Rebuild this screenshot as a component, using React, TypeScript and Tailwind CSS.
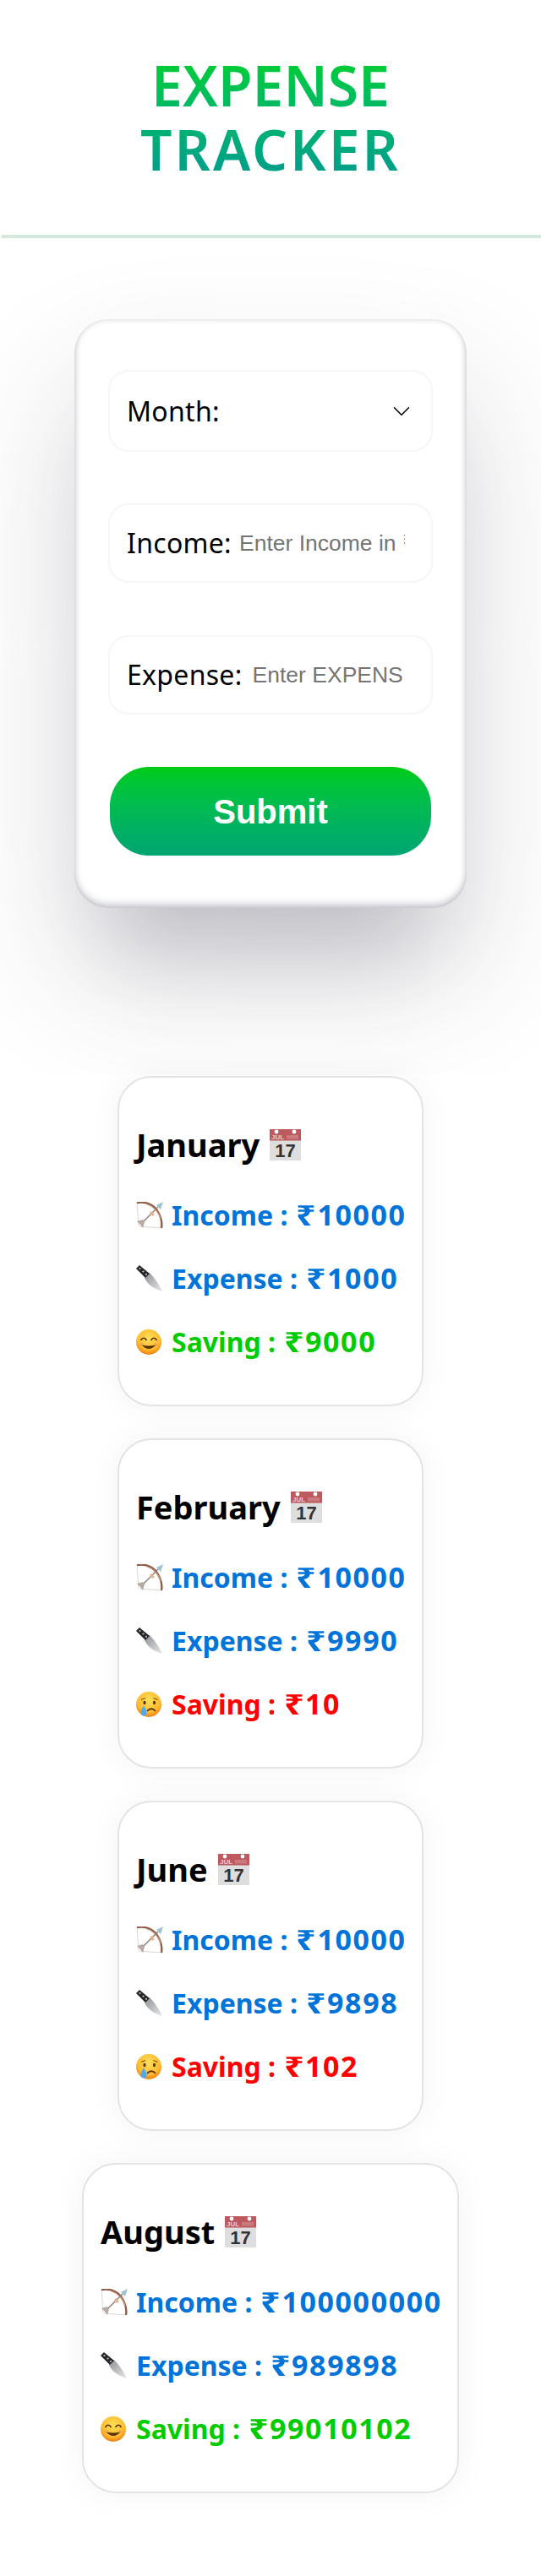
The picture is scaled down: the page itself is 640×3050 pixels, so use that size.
import { ChevronDown } from "lucide-react";

function CalendarIcon() {
  return (
    <svg width="37" height="37" viewBox="0 0 37 37" className="inline-block shrink-0 overflow-visible">
      <rect width="37" height="37" fill="#dedede" />
      <rect width="37" height="13.5" fill="#bc5a60" />
      <circle cx="8" cy="3" r="2.4" fill="#fff" />
      <circle cx="29" cy="3" r="2.4" fill="#fff" />
      <rect x="20" y="7" width="14" height="4.5" fill="#c97a7f" />
      <text x="2" y="12" fontSize="8" fill="#eccfd0" fontFamily="Liberation Sans, sans-serif">JUL</text>
      <text x="18.5" y="33" textAnchor="middle" fontSize="22" fill="#333" fontFamily="Liberation Sans, sans-serif">17</text>
    </svg>
  );
}

function BowIcon() {
  return (
    <svg width="32" height="32" viewBox="0 0 32 32" className="shrink-0">
      <path d="M1 1 L3 28" stroke="#d2cdc9" strokeWidth="0.8" fill="none" />
      <path d="M3 29 L30 31" stroke="#d2cdc9" strokeWidth="0.8" fill="none" />
      <path d="M1 1 C12 -1 22 4 26 12 C30 19 31 25 30 31" stroke="#8f5e48" strokeWidth="2.4" fill="none" />
      <path d="M13 3 C20 5 27 12 29 20" stroke="#c9997f" strokeWidth="1.2" fill="none" />
      <path d="M8 24 L26 6" stroke="#8d7f78" strokeWidth="1.5" />
      <path d="M24 4 L32 0 L29 9 Z" fill="#9cc3cf" />
      <path d="M1 23 L8 21 L10 24 L8 31 L5 27 Z" fill="#b7aaa4" />
      <path d="M18 11 L22 15 L19 17 L16 13 Z" fill="#e2b48c" />
    </svg>
  );
}

function KnifeIcon() {
  return (
    <svg width="32" height="32" viewBox="0 0 32 32" className="shrink-0">
      <defs>
        <linearGradient id="blade" x1="0" y1="0" x2="1" y2="1">
          <stop offset="0%" stopColor="#8d9094" />
          <stop offset="100%" stopColor="#e8e9ea" />
        </linearGradient>
      </defs>
      <path d="M10 15 L16 9 C22 15 28 24 31 31 C22 28 14 24 10 15 Z" fill="url(#blade)" />
      <path d="M0 4 L4 0 L16 10 L11 15 Z" fill="#26262a" />
      <circle cx="4.5" cy="4" r="1.1" fill="#c4c4c4" />
      <circle cx="8.5" cy="7.5" r="1.1" fill="#c4c4c4" />
      <circle cx="12" cy="10.8" r="1.1" fill="#c4c4c4" />
    </svg>
  );
}

function SmileIcon() {
  return (
    <svg width="30" height="30" viewBox="0 0 30 30" className="shrink-0">
      <defs>
        <radialGradient id="smile" cx="50%" cy="35%" r="65%">
          <stop offset="0%" stopColor="#ffe05a" />
          <stop offset="70%" stopColor="#fdbb2e" />
          <stop offset="100%" stopColor="#ee7d10" />
        </radialGradient>
      </defs>
      <circle cx="15" cy="15" r="15" fill="url(#smile)" />
      <path d="M5.5 13 Q9 7.5 12.5 13 M17.5 13 Q21 7.5 24.5 13" stroke="#5a3208" strokeWidth="1.7" fill="none" />
      <path d="M6 18 Q15 28 24 18 Q15 21 6 18 Z" fill="#5a3208" />
      <ellipse cx="6" cy="18" rx="3" ry="2" fill="#f59a50" opacity="0.5" />
      <ellipse cx="24" cy="18" rx="3" ry="2" fill="#f59a50" opacity="0.5" />
    </svg>
  );
}

function CryIcon() {
  return (
    <svg width="30" height="30" viewBox="0 0 30 30" className="shrink-0">
      <defs>
        <radialGradient id="cry" cx="50%" cy="35%" r="65%">
          <stop offset="0%" stopColor="#ffe05a" />
          <stop offset="70%" stopColor="#fdbb2e" />
          <stop offset="100%" stopColor="#ee7d10" />
        </radialGradient>
      </defs>
      <circle cx="15" cy="15" r="15" fill="url(#cry)" />
      <ellipse cx="10" cy="13" rx="1.6" ry="2.2" fill="#5a3208" />
      <ellipse cx="21.5" cy="13" rx="1.6" ry="2.2" fill="#5a3208" />
      <path d="M6 9.5 L11 7.5 M25.5 9.5 L20.5 7.5" stroke="#7a4a10" strokeWidth="1.2" fill="none" />
      <path d="M13 23 Q18 17.5 23 23" stroke="#5a3208" strokeWidth="1.8" fill="none" />
      <path d="M9 16.5 Q4.5 23 6 27 Q9 30 12 27 Q13.5 23 9 16.5 Z" fill="#4fa9ea" />
    </svg>
  );
}

type MonthRecord = { month: string; income: number; expense: number; saving: number; wide?: boolean; happy: boolean };

const records: MonthRecord[] = [
  { month: "January", income: 10000, expense: 1000, saving: 9000, happy: true },
  { month: "February", income: 10000, expense: 9990, saving: 10, happy: false },
  { month: "June", income: 10000, expense: 9898, saving: 102, happy: false },
  { month: "August", income: 100000000, expense: 989898, saving: 99010102, wide: true, happy: true },
];

function Row({ icon, label, value, color }: { icon: React.ReactNode; label: string; value: number; color: string }) {
  return (
    <div className={`flex items-center h-[75px] text-[33px] font-bold whitespace-nowrap ${color}`}>
      <span className="w-[42px] shrink-0">{icon}</span>
      <span className="text-[32px]">{label} :</span>
      <span className="ml-[10px] w-[25px] origin-left scale-x-[1.25]">₹</span>
      <span className="text-[34px] tracking-[1.6px]">{value}</span>
    </div>
  );
}

function RecordCard({ record }: { record: MonthRecord }) {
  return (
    <div className={`${record.wide ? "w-[446px]" : "w-[362px]"} pl-[20px] h-[391px] rounded-[40px] border-2 border-[#e4e4e4] bg-white pt-[44px] shadow-[0_0_40px_rgba(0,0,0,0.05)]`}>
      <div className="flex items-center gap-[12px] h-[70px] mb-[11px] text-[38px] font-bold text-black">
        {record.month} <CalendarIcon />
      </div>
      <Row icon={<BowIcon />} label="Income" value={record.income} color="text-[#0074d9]" />
      <Row icon={<KnifeIcon />} label="Expense" value={record.expense} color="text-[#0074d9]" />
      <Row
        icon={record.happy ? <SmileIcon /> : <CryIcon />}
        label="Saving"
        value={record.saving}
        color={record.happy ? "text-[#00cc00]" : "text-[#ff0000]"}
      />
    </div>
  );
}

function Field({ label, placeholder, inputClass }: { label: string; placeholder: string; inputClass: string }) {
  return (
    <div className="flex items-center w-[384px] h-[94px] rounded-[24px] border-2 border-[#f6f6f6] pl-[20px] text-[32px] tracking-[0.3px] text-black whitespace-nowrap">
      <span>{label}</span>
      <input placeholder={placeholder} className={`h-[40px] text-[26.5px] tracking-normal font-['Liberation_Sans',sans-serif] outline-none placeholder:text-[#757575] ${inputClass}`} />
    </div>
  );
}

export default function App() {
  return (
    <div className="w-[640px] h-[3050px] bg-white overflow-hidden font-['Noto_Sans','Open_Sans',sans-serif]">
      <div className="flex justify-center pt-[62px] pb-[64px]">
        <h1 className="w-[420px] text-center text-[66px] leading-[76px] font-semibold bg-gradient-to-b from-[#00d018] to-[#009b8f] bg-clip-text text-transparent">
          <span className="block">EXPENSE</span>
          <span className="block tracking-[3px]">TRACKER</span>
        </h1>
      </div>
      <div className="ml-[2px] h-[4px] bg-[#d5e8dc]" />

      <form className="mx-auto mt-[96px] w-[464px] h-[697px] rounded-[40px] bg-white pt-[60px] flex flex-col items-center shadow-[inset_0_-5px_8px_rgba(90,95,115,0.28),inset_0_0_6px_rgba(90,95,115,0.22),0_90px_90px_-50px_rgba(40,40,60,0.16),0_80px_160px_rgba(50,50,70,0.2)]">
        <div className="flex items-center justify-between w-[384px] h-[97px] rounded-[24px] border-2 border-[#f6f6f6] pl-[20px] pr-[18px] text-[32px] tracking-[0.3px] text-black">
          <span>Month:</span>
          <ChevronDown size={34} strokeWidth={1.1} />
        </div>
        <div className="mt-[61px]">
          <Field label="Income:" placeholder="Enter Income in ₹" inputClass="ml-[9px] w-[196px]" />
        </div>
        <div className="mt-[62px]">
          <Field label="Expense:" placeholder="Enter EXPENSE in ₹" inputClass="ml-[12px] w-[178px]" />
        </div>
        <button type="button" className="mt-[62px] w-[380px] h-[105px] rounded-[46px] bg-gradient-to-b from-[#00cc0e] to-[#00a572] text-white text-[40px] font-bold font-['Liberation_Sans',sans-serif]">
          Submit
        </button>
      </form>

      <div className="mt-[199px] flex flex-col items-center gap-[38px]">
        {records.map(r => <RecordCard key={r.month} record={r} />)}
      </div>
    </div>
  );
}
